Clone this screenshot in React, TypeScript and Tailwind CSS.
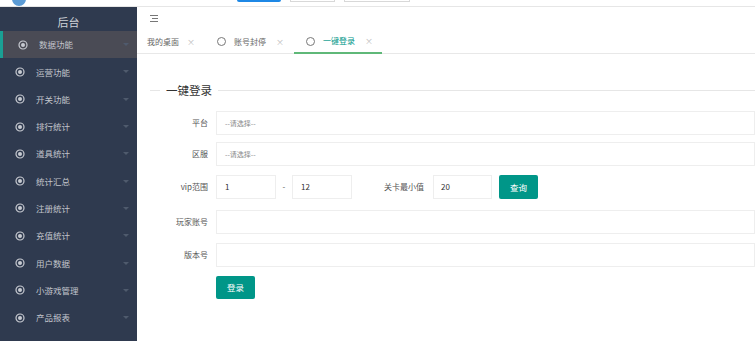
const font = { fontFamily: '"Noto Sans CJK SC", "Liberation Sans", sans-serif' }

const menu = ['数据功能', '运营功能', '开关功能', '排行统计', '道具统计', '统计汇总', '注册统计', '充值统计', '用户数据', '小游戏管理', '产品报表']

function DotIcon() {
  return (
    <svg width="10" height="10" viewBox="0 0 10 10" className="shrink-0">
      <circle cx="5" cy="5" r="4" fill="none" stroke="#c8cbd2" strokeWidth="1.2" />
      <circle cx="5" cy="5" r="2" fill="#c8cbd2" />
    </svg>
  )
}

function Caret() {
  return <span className="ml-auto w-0 h-0 border-x-[3px] border-x-transparent border-t-[3px] border-t-[#4f5a6d]" />
}

function Field({ label, placeholder }: { label: string; placeholder?: string }) {
  return (
    <div className="flex items-center h-[24px]">
      <div className="w-[72px] pr-[8px] text-right text-[8px] text-[#555]">{label}</div>
      <div className="flex-1 h-full border border-[#eeeeee] flex items-center pl-[8px] text-[7px] text-[#888]">{placeholder}</div>
    </div>
  )
}

export default function App() {
  return (
    <div className="w-[755px] h-[341px] overflow-hidden bg-white flex flex-col" style={font}>
      {/* cropped top bar */}
      <div className="h-[7px] shrink-0 flex items-end border-b border-[#e6e6e6] relative">
        <div className="absolute left-[12px] -top-[8px] w-[14px] h-[14px] rounded-full bg-[#5b9bd5]" />
        <div className="absolute left-[237px] -top-[2px] w-[44px] h-[4px] bg-[#1e88e5] rounded-b-[2px]" />
        <div className="absolute left-[290px] -top-[2px] w-[45px] h-[4px] border border-t-0 border-[#d8d8d8]" />
        <div className="absolute left-[344px] -top-[2px] w-[66px] h-[4px] border border-t-0 border-[#d8d8d8]" />
      </div>
      <div className="flex flex-1 min-h-0">
        <aside className="w-[137px] shrink-0 bg-[#2f3a4f] flex flex-col">
          <div className="h-[24px] flex items-end justify-center pb-[1px] text-[11px] text-[#d0d3d9]">后台</div>
          {menu.map((m, i) => (
            <div
              key={m}
              className={`h-[27.3px] flex items-center gap-[11px] pl-[15px] pr-[8px] text-[8.5px] text-[#c2c5cc] ${i === 0 ? 'bg-[#4a4b55] border-l-[3px] border-[#1aa094] pl-[12px]' : ''}`}
            >
              <DotIcon />
              <span>{m}</span>
              <Caret />
            </div>
          ))}
        </aside>
        <main className="flex-1 flex flex-col">
          <div className="h-[23px] flex items-center pl-[12px]">
            <svg width="10" height="9" viewBox="0 0 10 9">
              <path d="M1 1.5h8M3 4.5h6M1 7.5h8" stroke="#777" strokeWidth="1.1" />
            </svg>
          </div>
          <div className="h-[24px] flex items-stretch border-b border-[#e8e8e8] text-[8px] text-[#666] whitespace-nowrap">
            <div className="flex items-center gap-[8px] pl-[10px] pr-[10px]">
              <span>我的桌面</span>
              <span className="text-[#bbb]">×</span>
            </div>
            <div className="flex items-center gap-[8px] pl-[12px] pr-[10px]">
              <span className="w-[9px] h-[9px] rounded-full border border-[#777]" />
              <span>账号封停</span>
              <span className="ml-[2px] text-[#bbb]">×</span>
            </div>
            <div className="flex items-center gap-[8px] pl-[12px] pr-[9px] border-b-2 border-[#5fb878] -mb-px text-[#009688]">
              <span className="w-[9px] h-[9px] rounded-full border border-[#777]" />
              <span>一键登录</span>
              <span className="ml-[2px] text-[#bbb]">×</span>
            </div>
          </div>
          <div className="pl-[13px] pt-[28px]">
            <div className="flex items-center">
              <div className="w-[10px] border-t border-[#e6e6e6]" />
              <span className="px-[6px] text-[11.5px] text-[#333]">一键登录</span>
              <div className="flex-1 border-t border-[#e6e6e6]" />
            </div>
            <div className="mt-[12px] flex flex-col gap-[9px] -ml-[6px]">
              <Field label="平台" placeholder="--请选择--" />
              <div className="-mt-[2px]">
                <Field label="区服" placeholder="--请选择--" />
              </div>
              <div className="flex items-center h-[24px]">
                <div className="w-[72px] pr-[8px] text-right text-[8px] text-[#555]">vip范围</div>
                <div className="w-[60px] h-full border border-[#eeeeee] flex items-center pl-[8px] text-[8px] text-[#333]">1</div>
                <span className="w-[16px] text-center text-[8px] text-[#555]">-</span>
                <div className="w-[60px] h-full border border-[#eeeeee] flex items-center pl-[8px] text-[8px] text-[#333]">12</div>
                <div className="w-[81px] pr-[9px] text-right text-[8px] text-[#555]">关卡最小值</div>
                <div className="w-[59px] h-full border border-[#eeeeee] flex items-center pl-[7px] text-[8px] text-[#333]">20</div>
                <button className="ml-[7px] w-[39px] h-full rounded-[2px] bg-[#009688] text-white text-[8.5px]">查询</button>
              </div>
              <div className="mt-[2px]">
                <Field label="玩家账号" />
              </div>
              <Field label="版本号" />
              <div className="pl-[72px] flex">
                <button className="w-[39px] h-[23px] rounded-[2px] bg-[#009688] text-white text-[8.5px]">登录</button>
              </div>
            </div>
          </div>
        </main>
      </div>
    </div>
  )
}
